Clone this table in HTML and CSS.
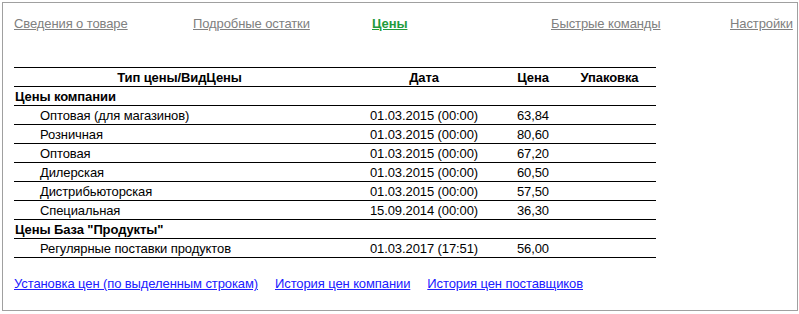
FILE: index.html
```html
<!DOCTYPE html>
<html lang="ru">
<head>
<meta charset="utf-8">
<link rel="stylesheet" href="styles.css">
</head>
<body>
<div class="frame">
  <nav class="tabs">
    <a class="tab" href="#">Сведения о товаре</a>
    <a class="tab" href="#">Подробные остатки</a>
    <a class="tab active" href="#">Цены</a>
    <a class="tab" href="#">Быстрые команды</a>
    <a class="tab" href="#">Настройки</a>
  </nav>
  <table class="prices">
    <colgroup>
      <col class="c-name"><col class="c-date"><col class="c-price"><col class="c-pack">
    </colgroup>
    <thead>
      <tr><th>Тип цены/ВидЦены</th><th>Дата</th><th>Цена</th><th>Упаковка</th></tr>
    </thead>
    <tbody>
      <tr class="group"><td>Цены компании</td><td></td><td></td><td></td></tr>
      <tr><td class="sub">Оптовая (для магазинов)</td><td>01.03.2015 (00:00)</td><td>63,84</td><td></td></tr>
      <tr><td class="sub">Розничная</td><td>01.03.2015 (00:00)</td><td>80,60</td><td></td></tr>
      <tr><td class="sub">Оптовая</td><td>01.03.2015 (00:00)</td><td>67,20</td><td></td></tr>
      <tr><td class="sub">Дилерская</td><td>01.03.2015 (00:00)</td><td>60,50</td><td></td></tr>
      <tr><td class="sub">Дистрибьюторская</td><td>01.03.2015 (00:00)</td><td>57,50</td><td></td></tr>
      <tr><td class="sub">Специальная</td><td>15.09.2014 (00:00)</td><td>36,30</td><td></td></tr>
      <tr class="group"><td>Цены База "Продукты"</td><td></td><td></td><td></td></tr>
      <tr><td class="sub">Регулярные поставки продуктов</td><td>01.03.2017 (17:51)</td><td>56,00</td><td></td></tr>
    </tbody>
  </table>
  <div class="actions">
    <a href="#">Установка цен (по выделенным строкам)</a>
    <a href="#">История цен компании</a>
    <a href="#">История цен поставщиков</a>
  </div>
</div>
</body>
</html>
```
FILE: styles.css
```css
html, body {
  margin: 0;
  padding: 0;
  background: #ffffff;
}
body {
  font-family: "Liberation Sans", Arial, sans-serif;
  font-size: 13px;
  letter-spacing: -0.1px;
  color: #000;
}
.frame {
  margin: 2px 0 0 2px;
  width: 794px;
  height: 307px;
  border: 1px solid #a0a0a0;
  box-sizing: content-box;
  padding: 0;
}
.tabs {
  display: grid;
  grid-template-columns: 179px 179px 179px 179px auto;
  padding: 13px 0 0 11px;
  line-height: 15px;
}
.tab {
  color: #808080;
  text-decoration: underline;
  white-space: nowrap;
}
.tab.active {
  color: #1e9b3c;
  font-weight: bold;
}
.prices {
  margin: 36px 0 0 11px;
  width: 642px;
  border-collapse: collapse;
  table-layout: fixed;
  border-top: 1px solid #000;
}
.c-name { width: 331px; }
.c-date { width: 158px; }
.c-price { width: 60px; }
.c-pack { width: 93px; }
.prices tr {
  height: 18px;
  border-bottom: 1px solid #000;
}
.prices th, .prices td {
  padding: 1px 0 0 0;
  height: 17px;
  line-height: 17px;
  white-space: nowrap;
  text-align: center;
}
.prices th {
  font-weight: bold;
}
.prices td:first-child {
  text-align: left;
  padding-left: 1px;
}
.prices td.sub {
  padding-left: 26px;
}
.group td {
  font-weight: bold;
}
.actions {
  display: flex;
  gap: 17px;
  padding: 18px 0 0 11px;
  line-height: 15px;
}
.actions a {
  color: #2020ff;
  text-decoration: underline;
}
```
